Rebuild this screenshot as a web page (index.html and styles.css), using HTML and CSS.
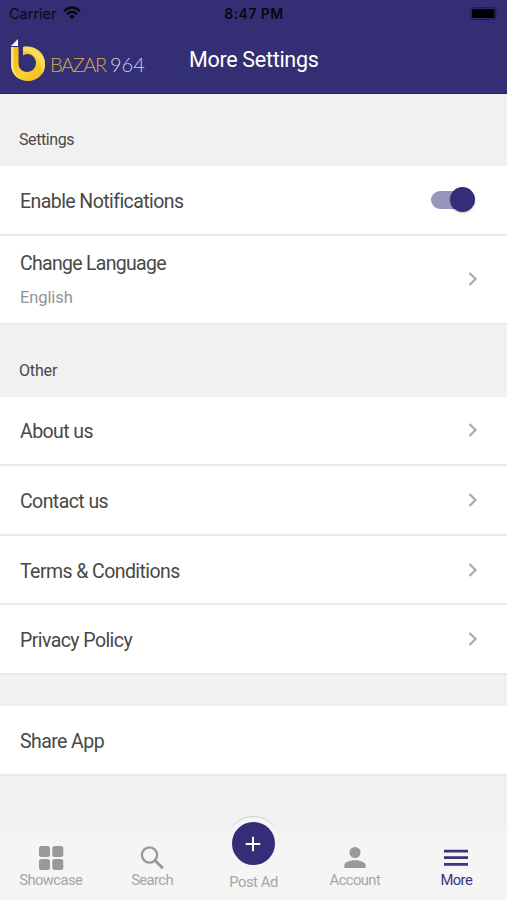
FILE: index.html
```html
<!DOCTYPE html>
<html lang="en">
<head>
<meta charset="utf-8">
<title>More Settings</title>
<link rel="stylesheet" href="styles.css">
</head>
<body>
<div class="app">
  <header class="header">
    <div class="status">
      <div class="carrier"><span>Carrier</span>
        <svg width="18" height="14" viewBox="0 0 18 14" fill="none" stroke="#080713" stroke-width="2.500"><path d="M1 5.100Q9-2.100 17 5.100M3.800 8.100q5.200-4.500 10.400 0"/><path d="M6 10.300q3-2.300 6 0l-3 3z" fill="#080713" stroke="none"/></svg>
      </div>
      <span class="time">8:47 PM</span>
      <svg class="battery" width="29" height="13" viewBox="0 0 29 13"><rect x=".7" y=".7" width="25" height="11.600" rx="3" fill="none" stroke="#211e4c" stroke-width="1.200"/><rect x="2" y="2" width="22.500" height="9" rx="1.600" fill="#000"/><path d="M27 4.600q1.800 1.900 0 3.800z" fill="#211e4c"/></svg>
    </div>
    <div class="titlebar">
      <div class="brand">
        <svg width="36" height="44" viewBox="0 0 36 44">
          <defs><linearGradient id="gold" x1="0" x2="1" y1="0" y2="1"><stop offset="0" stop-color="#f5b817"/><stop offset=".55" stop-color="#f7d32d"/><stop offset="1" stop-color="#f3b51c"/></linearGradient></defs>
          <path d="M1 8h7.500v16c0 5.500 3.500 9 8.500 9s9-4 9-9-4-9-8.500-9c-2.500 0-4.500 1.500-4.500 1.500V8c11-2 22 5 22 17 0 10-7.500 17-17 17S1 35.500 1 25z" fill="url(#gold)"/>
          <path d="M13 7.900c11-2 22 5 22 17 0 4-1 7-3 10C32 22 25 14 13 12z" fill="#f9dc58"/>
          <path d="M1 8h2.500v18c0 7 3 11 8 14C5 38 1 33 1 25z" fill="#fff0a0" opacity=".7"/>
          <path d="M1 7 8 0v7z" fill="#fff"/>
        </svg>
        <span class="brand-name">BAZAR</span><span class="brand-number">964</span>
      </div>
      <h1>More Settings</h1>
    </div>
  </header>

  <main>
    <h2 class="settings">Settings</h2>
    <section>
      <div class="row"><span>Enable Notifications</span><span class="switch"></span></div>
      <div class="row tall"><div class="stack"><span>Change Language</span><small>English</small></div><svg class="chevron" viewBox="0 0 10 16"><path d="m1.500 2 6 6-6 6"/></svg></div>
    </section>
    <h2>Other</h2>
    <section>
      <div class="row"><span>About us</span><svg class="chevron" viewBox="0 0 10 16"><path d="m1.500 2 6 6-6 6"/></svg></div>
      <div class="row"><span>Contact us</span><svg class="chevron" viewBox="0 0 10 16"><path d="m1.500 2 6 6-6 6"/></svg></div>
      <div class="row"><span>Terms &amp; Conditions</span><svg class="chevron" viewBox="0 0 10 16"><path d="m1.500 2 6 6-6 6"/></svg></div>
      <div class="row"><span>Privacy Policy</span><svg class="chevron" viewBox="0 0 10 16"><path d="m1.500 2 6 6-6 6"/></svg></div>
    </section>
    <section class="share"><div class="row"><span>Share App</span></div></section>
  </main>

  <nav class="nav">
    <div class="tab"><svg width="26" height="26" viewBox="0 0 26 26" fill="currentColor"><rect x="1" y="1" width="11" height="11" rx="2.500"/><rect x="14.300" y="1" width="11" height="11" rx="2.500"/><rect x="1" y="14" width="11" height="11" rx="2.500"/><rect x="14.300" y="14" width="11" height="11" rx="2.500"/></svg><span>Showcase</span></div>
    <div class="tab"><svg width="26" height="26" viewBox="0 0 26 26" fill="none" stroke="currentColor"><circle cx="10.500" cy="10" r="7.600" stroke-width="2.400"/><path d="m15.500 15 8.300 8.300" stroke-width="3"/></svg><span>Search</span></div>
    <div class="tab post"><div class="add"><svg width="16" height="16" viewBox="0 0 16 16" fill="none" stroke="#fff" stroke-width="2"><path d="M8 .7v14.600M.7 8h14.600"/></svg></div><span>Post Ad</span></div>
    <div class="tab"><svg width="26" height="26" viewBox="0 0 26 26" fill="currentColor"><circle cx="13" cy="7.500" r="5.500"/><path d="M2.300 23v-2.200c0-4.200 6.600-5.500 10.700-5.500s10.700 1.300 10.700 5.500V23z"/></svg><span>Account</span></div>
    <div class="tab active"><svg width="26" height="26" viewBox="0 0 26 26" fill="none" stroke="currentColor" stroke-width="2.700"><path d="M1 6.200h24M1 12.700h24M1 19.300h24"/></svg><span>More</span></div>
  </nav>
</div>
</body>
</html>
```
FILE: styles.css
```css
* { box-sizing: border-box; }
body { margin: 0; font-family: Roboto, "Liberation Sans", sans-serif; color: #484848; }
.app { width: 507px; height: 900px; display: flex; flex-direction: column; background: #f1f1f1; overflow: hidden; }
.header { height: 94px; flex: none; background: #342f74; border-bottom: 1px solid #29255e; }
.status { height: 27px; display: grid; grid-template-columns: 1fr auto 1fr; align-items: center; padding: 0 8px 0 9px; color: #080713; font: 14.5px/27px Inter, sans-serif; }
.carrier { display: flex; align-items: center; gap: 6px; }
.carrier svg { margin-top: -2px; }
.time { font-weight: 600; font-size: 14px; letter-spacing: .45px; }
.battery { justify-self: end; }
.titlebar { height: 66px; display: flex; padding-left: 10px; }
.brand { display: flex; width: 179px; padding-top: 12px; }
.brand-name, .brand-number { font: 300 20px/24px Lato, sans-serif; margin-top: 13px; }
.brand-name { width: 56px; margin-left: 4px; color: #dca83e; letter-spacing: -1.4px; }
.brand-number { margin-left: 4px; color: #d2d0ef; }
h1 { margin: 0; color: #fff; font-size: 21.5px; line-height: 65px; font-weight: 400; letter-spacing: -.3px; }
h2 { height: 72px; margin: 0; padding: 34px 19px 0; font-size: 16px; line-height: 24px; font-weight: 400; letter-spacing: -.15px; }
.settings { letter-spacing: -.4px; }
section { background: #fff; }
.row { height: 69.6px; border-bottom: 2px solid #e9e9e9; padding: 0 29px 0 20px; display: flex; align-items: center; justify-content: space-between; font-size: 19.5px; letter-spacing: -.57px; }
.row > span:first-child { padding-top: 3px; }
.tall { height: 89px; }
.stack { display: flex; flex-direction: column; gap: 11px; line-height: 23px; padding-top: 2px; }
.stack > span { letter-spacing: -.7px; }
.stack small { font-size: 16.5px; color: #929292; letter-spacing: -.1px; }
.chevron { width: 10px; height: 16px; fill: none; stroke: #aaa; stroke-width: 2.2; }
.switch { width: 44px; height: 25px; display: flex; align-items: center; position: relative; margin-right: 3px; }
.switch::before { content: ""; width: 35px; height: 18px; background: #9996bd; border-radius: 9px; }
.switch::after { content: ""; position: absolute; right: 0; width: 25px; height: 25px; border-radius: 50%; background: #342d77; box-shadow: 0 1px 2px #0004; }
.share { margin-top: 31px; }
.nav { height: 69px; margin-top: auto; flex: none; background: #f5f5f5; display: grid; grid-template-columns: repeat(5, 1fr); color: #a6a6a6; }
.tab { display: flex; flex-direction: column; align-items: center; padding-top: 14px; font-size: 14.8px; line-height: 18px; letter-spacing: -.6px; }
.tab > svg { color: #999; flex: none; }
.post { padding-top: 0; margin-top: -14px; letter-spacing: -.45px; }
.add { width: 53px; height: 53px; flex: none; display: flex; align-items: center; justify-content: center; background: #342d77; border: 5px solid #f5f5f5; border-radius: 50%; box-shadow: 0 -2px 1px -1px #ccc; }
.post > span { margin-top: 3px; }
.active, .active > svg { color: #3c3578; }
```
